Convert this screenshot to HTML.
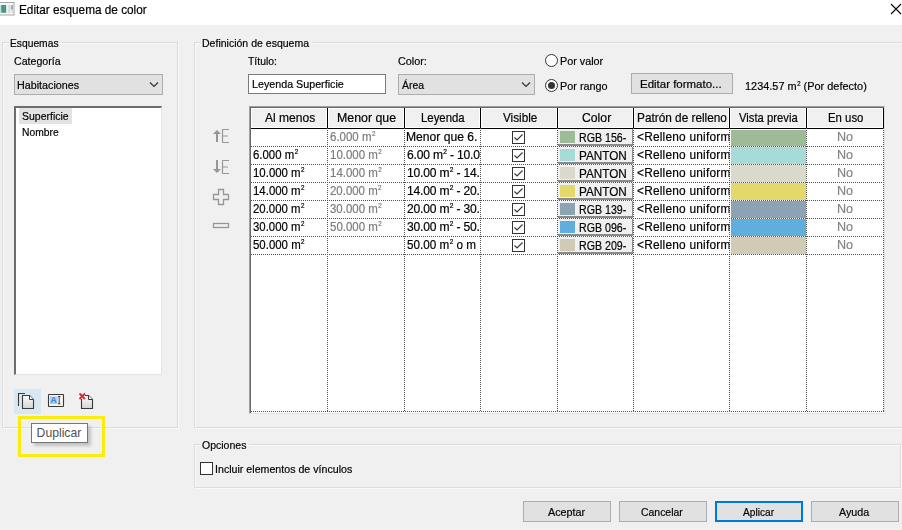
<!DOCTYPE html>
<html><head><meta charset="utf-8"><style>
html,body{margin:0;padding:0}
body{width:902px;height:530px;position:relative;overflow:hidden;background:#f0f0f0;font-family:"Liberation Sans",sans-serif}
.t{position:absolute;white-space:nowrap;color:#000;-webkit-text-stroke:0.2px currentColor}
sup{font-size:0.55em;vertical-align:0;position:relative;top:-0.7em;margin-left:0.5px}
</style></head><body>
<div class="g" style="position:absolute;left:0px;top:0px;width:902px;height:25px;background:#fff"></div>
<svg class="g" style="position:absolute;left:0;top:2px" width="15" height="14" viewBox="0 0 15 14">
<rect x="-0.5" y="0.5" width="14.5" height="12.5" fill="#f4f8f8" stroke="#a4a8a8"/>
<rect x="0" y="3" width="1.2" height="8" fill="#bfe3e3"/>
<rect x="1.2" y="3" width="5" height="7.8" fill="#4e9288"/>
<rect x="7.8" y="3" width="2.4" height="8" fill="#dcdcdc"/>
<rect x="10.8" y="3.2" width="2.2" height="4.5" fill="#8fb5ad"/>
<rect x="10.8" y="7.7" width="2.2" height="3" fill="#d6e6e2"/>
</svg>
<div id="title" class="t" style="left:18.68px;top:4.03px;font-size:12.72px;line-height:12.72px;letter-spacing:0.000px;color:#000;transform:scaleX(0.9263);transform-origin:0 0;">Editar esquema de color</div>
<svg class="g" style="position:absolute;left:890px;top:3px" width="12" height="12" viewBox="0 0 12 12"><path d="M1 1L11 11M11 1L1 11" stroke="#000" stroke-width="1.1"/></svg>
<div class="g" style="position:absolute;left:3px;top:43px;width:176px;height:386px;border:1px solid #f9f9f9;box-sizing:border-box"></div>
<div class="g" style="position:absolute;left:2px;top:42px;width:176px;height:386px;border:1px solid #dcdcdc;box-sizing:border-box"></div>
<div class="g" style="position:absolute;left:9px;top:41px;width:53px;height:4px;background:#f0f0f0"></div>
<div class="g" style="position:absolute;left:195px;top:43px;width:717px;height:386px;border:1px solid #f9f9f9;box-sizing:border-box"></div>
<div class="g" style="position:absolute;left:194px;top:42px;width:717px;height:386px;border:1px solid #dcdcdc;box-sizing:border-box"></div>
<div class="g" style="position:absolute;left:201px;top:41px;width:112px;height:4px;background:#f0f0f0"></div>
<div class="g" style="position:absolute;left:195px;top:445px;width:707px;height:44px;border:1px solid #f9f9f9;box-sizing:border-box"></div>
<div class="g" style="position:absolute;left:194px;top:444px;width:707px;height:44px;border:1px solid #dcdcdc;box-sizing:border-box"></div>
<div class="g" style="position:absolute;left:200px;top:443px;width:49px;height:4px;background:#f0f0f0"></div>
<div id="esq" class="t" style="left:9.99px;top:37.13px;font-size:11.66px;line-height:11.66px;letter-spacing:0.000px;color:#000;transform:scaleX(0.8811);transform-origin:0 0;">Esquemas</div>
<div id="defi" class="t" style="left:202.43px;top:37.13px;font-size:11.66px;line-height:11.66px;letter-spacing:0.000px;color:#000;transform:scaleX(0.9031);transform-origin:0 0;">Definición de esquema</div>
<div id="opc" class="t" style="left:202.38px;top:439.13px;font-size:11.66px;line-height:11.66px;letter-spacing:0.000px;color:#000;transform:scaleX(0.9016);transform-origin:0 0;">Opciones</div>
<div id="cat" class="t" style="left:13.72px;top:55.13px;font-size:11.66px;line-height:11.66px;letter-spacing:0.000px;color:#000;transform:scaleX(0.9089);transform-origin:0 0;">Categoría</div>
<div class="g" style="position:absolute;left:14px;top:74px;width:149px;height:21px;background:#e1e1e1;border:1px solid #adadad;box-sizing:border-box"></div>
<div id="hab" class="t" style="left:16.89px;top:78.63px;font-size:11.66px;line-height:11.66px;letter-spacing:0.000px;color:#000;transform:scaleX(0.9223);transform-origin:0 0;">Habitaciones</div>
<svg class="g" style="position:absolute;left:149px;top:81px" width="10" height="7" viewBox="0 0 10 7"><path d="M1 1.5L5 5.5L9 1.5" fill="none" stroke="#333" stroke-width="1.2"/></svg>
<div class="g" style="position:absolute;left:14px;top:106px;width:148px;height:269px;background:#fff;border-top:2px solid #6d6d6d;border-left:2px solid #6d6d6d;border-right:1px solid #e3e3e3;border-bottom:1px solid #e3e3e3;box-sizing:border-box"></div>
<div class="g" style="position:absolute;left:19px;top:108px;width:53px;height:16px;background:#e3e3e3"></div>
<div id="sup" class="t" style="left:21.61px;top:109.63px;font-size:11.66px;line-height:11.66px;letter-spacing:0.000px;color:#000;transform:scaleX(0.9003);transform-origin:0 0;">Superficie</div>
<div id="nom" class="t" style="left:21.88px;top:125.63px;font-size:11.66px;line-height:11.66px;letter-spacing:0.000px;color:#000;transform:scaleX(0.8839);transform-origin:0 0;">Nombre</div>
<div class="g" style="position:absolute;left:14px;top:389px;width:27px;height:25px;background:#d9e7f3"></div>
<svg class="g" style="position:absolute;left:14px;top:389px" width="84" height="24" viewBox="0 0 84 24">
<defs><linearGradient id="pg" x1="0" y1="0" x2="0" y2="1"><stop offset="0" stop-color="#fbfbfb"/><stop offset="1" stop-color="#d4d4d4"/></linearGradient></defs>
<path d="M4.5 17V4.5H11" fill="none" stroke="#3a3a3a" stroke-width="1.1"/>
<path d="M8.5 6.5H15.5L19.5 10.5V19.5H8.5Z" fill="url(#pg)" stroke="#3a3a3a" stroke-width="1.1"/>
<path d="M15.5 6.5V10.5H19.5" fill="#fff" stroke="#3a3a3a" stroke-width="1"/>
<rect x="34.5" y="5.5" width="15" height="12" rx="0.5" fill="#f4f4f4" stroke="#3a3a3a" stroke-width="1.1"/>
<rect x="36" y="7.5" width="7.6" height="7.5" fill="#a9d1f5"/>
<text x="36.6" y="14.2" font-family="Liberation Sans" font-size="8.6" font-weight="bold" fill="#3a86d0">A</text>
<path d="M44 7.5H46.4M45.2 7.5V14.8M44 14.8H46.4" stroke="#333" stroke-width="0.9" fill="none"/>
<path d="M67.5 10V19.5H78.5V10.5L74.5 6.5H71" fill="url(#pg)" stroke="#3a3a3a" stroke-width="1.1"/>
<path d="M74.5 6.5V10.5H78.5" fill="#fff" stroke="#3a3a3a" stroke-width="1"/>
<path d="M65.5 4.5L71 10M71 4.5L65.5 10" stroke="#d42a2a" stroke-width="1.8"/>
</svg>
<div class="g" style="position:absolute;left:18px;top:416px;width:87px;height:41px;border:3px solid #fcec0c;box-sizing:border-box"></div>
<div class="g" style="position:absolute;left:34px;top:426px;width:57px;height:20px;background:#6e6e6e;opacity:0.35;filter:blur(1.5px)"></div>
<div class="g" style="position:absolute;left:31px;top:423px;width:57px;height:20px;background:#fff;border:1px solid #767676;box-sizing:border-box"></div>
<div id="dup" class="t" style="left:36.59px;top:427.18px;font-size:12.19px;line-height:12.19px;letter-spacing:0.000px;color:#505050;-webkit-text-stroke:0;">Duplicar</div>
<div id="tit" class="t" style="left:247.70px;top:54.83px;font-size:11.66px;line-height:11.66px;letter-spacing:0.000px;color:#000;transform:scaleX(0.8949);transform-origin:0 0;">Título:</div>
<div class="g" style="position:absolute;left:248px;top:74px;width:138px;height:20px;background:#fff;border:1px solid #7a7a7a;box-sizing:border-box"></div>
<div id="leys" class="t" style="left:252.36px;top:77.73px;font-size:11.66px;line-height:11.66px;letter-spacing:0.000px;color:#000;transform:scaleX(0.9193);transform-origin:0 0;">Leyenda Superficie</div>
<div id="colr" class="t" style="left:397.88px;top:55.03px;font-size:11.66px;line-height:11.66px;letter-spacing:0.000px;color:#000;transform:scaleX(0.9269);transform-origin:0 0;">Color:</div>
<div class="g" style="position:absolute;left:398px;top:74px;width:137px;height:21px;background:#e1e1e1;border:1px solid #adadad;box-sizing:border-box"></div>
<div id="area" class="t" style="left:402.00px;top:78.83px;font-size:11.66px;line-height:11.66px;letter-spacing:0.000px;color:#000;transform:scaleX(0.8964);transform-origin:0 0;">Área</div>
<svg class="g" style="position:absolute;left:521px;top:81px" width="10" height="7" viewBox="0 0 10 7"><path d="M1 1.5L5 5.5L9 1.5" fill="none" stroke="#333" stroke-width="1.2"/></svg>
<svg class="g" style="position:absolute;left:545px;top:54px" width="14" height="40" viewBox="0 0 14 40">
<circle cx="6.5" cy="6.5" r="6" fill="#fff" stroke="#333" stroke-width="1"/>
<circle cx="6.5" cy="31.5" r="6" fill="#fff" stroke="#333" stroke-width="1"/>
<circle cx="6.5" cy="31.5" r="3.5" fill="#333"/>
</svg>
<div id="pval" class="t" style="left:559.94px;top:55.03px;font-size:11.66px;line-height:11.66px;letter-spacing:0.000px;color:#000;transform:scaleX(0.9245);transform-origin:0 0;">Por valor</div>
<div id="pran" class="t" style="left:559.84px;top:79.73px;font-size:11.66px;line-height:11.66px;letter-spacing:0.000px;color:#000;transform:scaleX(0.9306);transform-origin:0 0;">Por rango</div>
<div class="g" style="position:absolute;left:631px;top:73px;width:102px;height:21px;background:#e1e1e1;border:1px solid #adadad;box-sizing:border-box"></div>
<div id="edf" class="t" style="left:639.60px;top:78.13px;font-size:11.66px;line-height:11.66px;letter-spacing:0.000px;color:#000;transform:scaleX(0.9846);transform-origin:0 0;">Editar formato...</div>
<div id="sup2def" class="t" style="left:744.51px;top:80.13px;font-size:11.66px;line-height:11.66px;letter-spacing:0.000px;color:#000;transform:scaleX(0.9383);transform-origin:0 0;">1234.57 m<sup>2</sup> (Por defecto)</div>
<svg class="g" style="position:absolute;left:210px;top:125px" width="22" height="110" viewBox="0 0 22 110">
<g fill="#969696" stroke="#969696">
<path d="M3 9L7 5L11 9Z" stroke="none"/><rect x="6" y="7" width="2" height="10" stroke="none"/>
<path d="M12.5 4.5V17.5M12.5 4.5H19M12.5 11H18M12.5 17.5H19" fill="none" stroke-width="1.2"/>
<path d="M3 44L7 48L11 44Z" stroke="none"/><rect x="6" y="35" width="2" height="10" stroke="none"/>
<path d="M12.5 35.5V48.5M12.5 35.5H19M12.5 42H18M12.5 48.5H19" fill="none" stroke-width="1.2"/>
<path d="M8.5 64.5H13.5V69.5H18.5V74.5H13.5V79.5H8.5V74.5H3.5V69.5H8.5Z" fill="none" stroke-width="1.3"/>
<rect x="3.5" y="98.5" width="15" height="4" fill="none" stroke-width="1.3"/>
</g></svg>
<div class="g" style="position:absolute;left:249px;top:106px;width:636px;height:308px;background:#fff;border-top:1px solid #a0a0a0;border-left:1px solid #a0a0a0;border-right:1px solid #e3e3e3;border-bottom:1px solid #e3e3e3;box-sizing:border-box"></div>
<div class="g" style="position:absolute;left:250px;top:107px;width:634px;height:306px;border-top:1px solid #696969;border-left:1px solid #696969;box-sizing:border-box"></div>
<div class="g" style="position:absolute;left:251px;top:108px;width:76px;height:20px;background:#f0f0f0;border:1px solid #fff;box-sizing:border-box"></div>
<div class="g" style="position:absolute;left:328px;top:108px;width:76px;height:20px;background:#f0f0f0;border:1px solid #fff;box-sizing:border-box"></div>
<div class="g" style="position:absolute;left:405px;top:108px;width:75px;height:20px;background:#f0f0f0;border:1px solid #fff;box-sizing:border-box"></div>
<div class="g" style="position:absolute;left:481px;top:108px;width:76px;height:20px;background:#f0f0f0;border:1px solid #fff;box-sizing:border-box"></div>
<div class="g" style="position:absolute;left:558px;top:108px;width:75px;height:20px;background:#f0f0f0;border:1px solid #fff;box-sizing:border-box"></div>
<div class="g" style="position:absolute;left:634px;top:108px;width:95px;height:20px;background:#f0f0f0;border:1px solid #fff;box-sizing:border-box"></div>
<div class="g" style="position:absolute;left:730px;top:108px;width:76px;height:20px;background:#f0f0f0;border:1px solid #fff;box-sizing:border-box"></div>
<div class="g" style="position:absolute;left:807px;top:108px;width:76px;height:20px;background:#f0f0f0;border:1px solid #fff;box-sizing:border-box"></div>
<div class="g" style="position:absolute;left:251px;top:128px;width:633px;height:1px;background:#000"></div>
<div class="g" style="position:absolute;left:327px;top:108px;width:1px;height:21px;background:#000"></div>
<div class="g" style="position:absolute;left:404px;top:108px;width:1px;height:21px;background:#000"></div>
<div class="g" style="position:absolute;left:480px;top:108px;width:1px;height:21px;background:#000"></div>
<div class="g" style="position:absolute;left:557px;top:108px;width:1px;height:21px;background:#000"></div>
<div class="g" style="position:absolute;left:633px;top:108px;width:1px;height:21px;background:#000"></div>
<div class="g" style="position:absolute;left:729px;top:108px;width:1px;height:21px;background:#000"></div>
<div class="g" style="position:absolute;left:806px;top:108px;width:1px;height:21px;background:#000"></div>
<div class="g" style="position:absolute;left:883px;top:108px;width:1px;height:21px;background:#000"></div>
<div class="g" style="position:absolute;left:327px;top:128px;width:1px;height:284px;background-image:repeating-linear-gradient(to bottom,#505050 0,#505050 1px,transparent 1px,transparent 2px)"></div>
<div class="g" style="position:absolute;left:404px;top:128px;width:1px;height:284px;background-image:repeating-linear-gradient(to bottom,#505050 0,#505050 1px,transparent 1px,transparent 2px)"></div>
<div class="g" style="position:absolute;left:480px;top:128px;width:1px;height:284px;background-image:repeating-linear-gradient(to bottom,#505050 0,#505050 1px,transparent 1px,transparent 2px)"></div>
<div class="g" style="position:absolute;left:557px;top:128px;width:1px;height:284px;background-image:repeating-linear-gradient(to bottom,#505050 0,#505050 1px,transparent 1px,transparent 2px)"></div>
<div class="g" style="position:absolute;left:633px;top:128px;width:1px;height:284px;background-image:repeating-linear-gradient(to bottom,#505050 0,#505050 1px,transparent 1px,transparent 2px)"></div>
<div class="g" style="position:absolute;left:729px;top:128px;width:1px;height:284px;background-image:repeating-linear-gradient(to bottom,#505050 0,#505050 1px,transparent 1px,transparent 2px)"></div>
<div class="g" style="position:absolute;left:806px;top:128px;width:1px;height:284px;background-image:repeating-linear-gradient(to bottom,#505050 0,#505050 1px,transparent 1px,transparent 2px)"></div>
<div class="g" style="position:absolute;left:883px;top:128px;width:1px;height:284px;background-image:repeating-linear-gradient(to bottom,#505050 0,#505050 1px,transparent 1px,transparent 2px)"></div>
<div class="g" style="position:absolute;left:251px;top:146px;width:633px;height:1px;background-image:repeating-linear-gradient(to right,#505050 0,#505050 1px,transparent 1px,transparent 2px)"></div>
<div class="g" style="position:absolute;left:251px;top:164px;width:633px;height:1px;background-image:repeating-linear-gradient(to right,#505050 0,#505050 1px,transparent 1px,transparent 2px)"></div>
<div class="g" style="position:absolute;left:251px;top:182px;width:633px;height:1px;background-image:repeating-linear-gradient(to right,#505050 0,#505050 1px,transparent 1px,transparent 2px)"></div>
<div class="g" style="position:absolute;left:251px;top:200px;width:633px;height:1px;background-image:repeating-linear-gradient(to right,#505050 0,#505050 1px,transparent 1px,transparent 2px)"></div>
<div class="g" style="position:absolute;left:251px;top:218px;width:633px;height:1px;background-image:repeating-linear-gradient(to right,#505050 0,#505050 1px,transparent 1px,transparent 2px)"></div>
<div class="g" style="position:absolute;left:251px;top:236px;width:633px;height:1px;background-image:repeating-linear-gradient(to right,#505050 0,#505050 1px,transparent 1px,transparent 2px)"></div>
<div class="g" style="position:absolute;left:251px;top:254px;width:633px;height:1px;background-image:repeating-linear-gradient(to right,#505050 0,#505050 1px,transparent 1px,transparent 2px)"></div>
<div class="g" style="position:absolute;left:251px;top:411px;width:633px;height:1px;background-image:repeating-linear-gradient(to right,#505050 0,#505050 1px,transparent 1px,transparent 2px)"></div>
<div id="h1" class="t" style="left:264.92px;top:112.23px;font-size:12.72px;line-height:12.72px;letter-spacing:0.000px;color:#000;transform:scaleX(0.9472);transform-origin:0 0;">Al menos</div>
<div id="h2" class="t" style="left:337.07px;top:112.23px;font-size:12.72px;line-height:12.72px;letter-spacing:0.000px;color:#000;transform:scaleX(0.9722);transform-origin:0 0;">Menor que</div>
<div id="h3" class="t" style="left:420.53px;top:112.23px;font-size:12.72px;line-height:12.72px;letter-spacing:0.000px;color:#000;transform:scaleX(0.8956);transform-origin:0 0;">Leyenda</div>
<div id="h4" class="t" style="left:503.45px;top:112.23px;font-size:12.72px;line-height:12.72px;letter-spacing:0.000px;color:#000;transform:scaleX(0.9216);transform-origin:0 0;">Visible</div>
<div id="h5" class="t" style="left:582.15px;top:112.23px;font-size:12.72px;line-height:12.72px;letter-spacing:0.000px;color:#000;transform:scaleX(0.9609);transform-origin:0 0;">Color</div>
<div id="h6" class="t" style="left:636.52px;top:112.23px;font-size:12.72px;line-height:12.72px;letter-spacing:0.000px;color:#000;transform:scaleX(0.9285);transform-origin:0 0;">Patrón de relleno</div>
<div id="h7" class="t" style="left:739.19px;top:112.23px;font-size:12.72px;line-height:12.72px;letter-spacing:0.000px;color:#000;transform:scaleX(0.8858);transform-origin:0 0;">Vista previa</div>
<div id="h8" class="t" style="left:827.53px;top:112.23px;font-size:12.72px;line-height:12.72px;letter-spacing:0.000px;color:#000;transform:scaleX(0.8940);transform-origin:0 0;">En uso</div>
<div id="b0sup2" class="t" style="left:330.00px;top:131.23px;font-size:12.72px;line-height:12.72px;letter-spacing:0.000px;color:#7c7c7c;transform:scaleX(0.9023);transform-origin:0 0;">6.000 m<sup>2</sup></div>
<div id="l0sup2" class="t" style="left:406.32px;top:131.23px;font-size:12.72px;line-height:12.72px;letter-spacing:0.000px;color:#000;transform:scaleX(0.9522);transform-origin:0 0;">Menor que 6.</div>
<div class="g" style="position:absolute;left:512px;top:131px;width:13px;height:13px;border:1px solid #333;background:#fff;box-sizing:border-box"></div>
<svg class="g" style="position:absolute;left:512px;top:131px" width="13" height="13" viewBox="0 0 13 13"><path d="M2.5 6.5L5 9L10.5 3.5" fill="none" stroke="#333" stroke-width="1.1"/></svg>
<div class="g" style="position:absolute;left:558px;top:129px;width:75px;height:17px;background:#f0f0f0;border-right:1px solid #8a8a8a;border-bottom:2px solid #8a8a8a;box-sizing:border-box"></div>
<div class="g" style="position:absolute;left:560px;top:131px;width:15px;height:12px;background:#9cbb96"></div>
<div id="c0" class="t" style="left:578.64px;top:132.03px;font-size:12.72px;line-height:12.72px;letter-spacing:0.000px;color:#000;transform:scaleX(0.8360);transform-origin:0 0;">RGB 156-</div>
<div id="p0" class="t" style="left:636.75px;top:131.23px;font-size:12.72px;line-height:12.72px;letter-spacing:0.220px;color:#000;width:99.20px;overflow:hidden;transform:scaleX(0.9350);transform-origin:0 0;">&lt;Relleno uniform</div>
<div class="g" style="position:absolute;left:731px;top:130px;width:75px;height:16px;background:#9cbb96"></div>
<div id="n0" class="t" style="left:836.57px;top:131.23px;font-size:12.72px;line-height:12.72px;letter-spacing:0.000px;color:#858585;transform:scaleX(0.9886);transform-origin:0 0;">No</div>
<div id="a1sup2" class="t" style="left:252.71px;top:149.23px;font-size:12.72px;line-height:12.72px;letter-spacing:0.000px;color:#000;transform:scaleX(0.8959);transform-origin:0 0;">6.000 m<sup>2</sup></div>
<div id="b1sup2" class="t" style="left:329.51px;top:149.23px;font-size:12.72px;line-height:12.72px;letter-spacing:0.000px;color:#7c7c7c;transform:scaleX(0.9029);transform-origin:0 0;">10.000 m<sup>2</sup></div>
<div id="l1sup2" class="t" style="left:406.71px;top:149.23px;font-size:12.72px;line-height:12.72px;letter-spacing:-0.200px;color:#000;width:77.15px;overflow:hidden;transform:scaleX(0.9500);transform-origin:0 0;">6.00 m<sup>2</sup> - 10.0</div>
<div class="g" style="position:absolute;left:512px;top:149px;width:13px;height:13px;border:1px solid #333;background:#fff;box-sizing:border-box"></div>
<svg class="g" style="position:absolute;left:512px;top:149px" width="13" height="13" viewBox="0 0 13 13"><path d="M2.5 6.5L5 9L10.5 3.5" fill="none" stroke="#333" stroke-width="1.1"/></svg>
<div class="g" style="position:absolute;left:558px;top:147px;width:75px;height:17px;background:#f0f0f0;border-right:1px solid #8a8a8a;border-bottom:2px solid #8a8a8a;box-sizing:border-box"></div>
<div class="g" style="position:absolute;left:560px;top:149px;width:15px;height:12px;background:#a7dbd8"></div>
<div id="c1" class="t" style="left:578.64px;top:150.03px;font-size:12.72px;line-height:12.72px;letter-spacing:0.000px;color:#000;transform:scaleX(0.9225);transform-origin:0 0;">PANTON</div>
<div id="p1" class="t" style="left:637.32px;top:149.23px;font-size:12.72px;line-height:12.72px;letter-spacing:0.220px;color:#000;width:98.59px;overflow:hidden;transform:scaleX(0.9350);transform-origin:0 0;">&lt;Relleno uniform</div>
<div class="g" style="position:absolute;left:731px;top:147px;width:75px;height:17px;background:#a7dbd8"></div>
<div id="n1" class="t" style="left:836.57px;top:149.23px;font-size:12.72px;line-height:12.72px;letter-spacing:0.000px;color:#858585;transform:scaleX(0.9886);transform-origin:0 0;">No</div>
<div id="a2sup2" class="t" style="left:252.57px;top:167.23px;font-size:12.72px;line-height:12.72px;letter-spacing:0.000px;color:#000;transform:scaleX(0.8984);transform-origin:0 0;">10.000 m<sup>2</sup></div>
<div id="b2sup2" class="t" style="left:329.51px;top:167.23px;font-size:12.72px;line-height:12.72px;letter-spacing:0.000px;color:#7c7c7c;transform:scaleX(0.9029);transform-origin:0 0;">14.000 m<sup>2</sup></div>
<div id="l2sup2" class="t" style="left:406.72px;top:167.23px;font-size:12.72px;line-height:12.72px;letter-spacing:-0.200px;color:#000;width:77.13px;overflow:hidden;transform:scaleX(0.9500);transform-origin:0 0;">10.00 m<sup>2</sup> - 14.</div>
<div class="g" style="position:absolute;left:512px;top:167px;width:13px;height:13px;border:1px solid #333;background:#fff;box-sizing:border-box"></div>
<svg class="g" style="position:absolute;left:512px;top:167px" width="13" height="13" viewBox="0 0 13 13"><path d="M2.5 6.5L5 9L10.5 3.5" fill="none" stroke="#333" stroke-width="1.1"/></svg>
<div class="g" style="position:absolute;left:558px;top:165px;width:75px;height:17px;background:#f0f0f0;border-right:1px solid #8a8a8a;border-bottom:2px solid #8a8a8a;box-sizing:border-box"></div>
<div class="g" style="position:absolute;left:560px;top:167px;width:15px;height:12px;background:#d9dacb"></div>
<div id="c2" class="t" style="left:578.64px;top:168.03px;font-size:12.72px;line-height:12.72px;letter-spacing:0.000px;color:#000;transform:scaleX(0.9225);transform-origin:0 0;">PANTON</div>
<div id="p2" class="t" style="left:637.32px;top:167.23px;font-size:12.72px;line-height:12.72px;letter-spacing:0.220px;color:#000;width:98.59px;overflow:hidden;transform:scaleX(0.9350);transform-origin:0 0;">&lt;Relleno uniform</div>
<div class="g" style="position:absolute;left:731px;top:165px;width:75px;height:17px;background:#d9dacb"></div>
<div id="n2" class="t" style="left:836.57px;top:167.23px;font-size:12.72px;line-height:12.72px;letter-spacing:0.000px;color:#858585;transform:scaleX(0.9886);transform-origin:0 0;">No</div>
<div id="a3sup2" class="t" style="left:252.57px;top:185.23px;font-size:12.72px;line-height:12.72px;letter-spacing:0.000px;color:#000;transform:scaleX(0.8984);transform-origin:0 0;">14.000 m<sup>2</sup></div>
<div id="b3sup2" class="t" style="left:329.55px;top:185.23px;font-size:12.72px;line-height:12.72px;letter-spacing:0.000px;color:#7c7c7c;transform:scaleX(0.8989);transform-origin:0 0;">20.000 m<sup>2</sup></div>
<div id="l3sup2" class="t" style="left:406.72px;top:185.23px;font-size:12.72px;line-height:12.72px;letter-spacing:-0.200px;color:#000;width:77.13px;overflow:hidden;transform:scaleX(0.9500);transform-origin:0 0;">14.00 m<sup>2</sup> - 20.</div>
<div class="g" style="position:absolute;left:512px;top:185px;width:13px;height:13px;border:1px solid #333;background:#fff;box-sizing:border-box"></div>
<svg class="g" style="position:absolute;left:512px;top:185px" width="13" height="13" viewBox="0 0 13 13"><path d="M2.5 6.5L5 9L10.5 3.5" fill="none" stroke="#333" stroke-width="1.1"/></svg>
<div class="g" style="position:absolute;left:558px;top:183px;width:75px;height:17px;background:#f0f0f0;border-right:1px solid #8a8a8a;border-bottom:2px solid #8a8a8a;box-sizing:border-box"></div>
<div class="g" style="position:absolute;left:560px;top:185px;width:15px;height:12px;background:#e3d96a"></div>
<div id="c3" class="t" style="left:578.64px;top:186.03px;font-size:12.72px;line-height:12.72px;letter-spacing:0.000px;color:#000;transform:scaleX(0.9225);transform-origin:0 0;">PANTON</div>
<div id="p3" class="t" style="left:637.32px;top:185.23px;font-size:12.72px;line-height:12.72px;letter-spacing:0.220px;color:#000;width:98.59px;overflow:hidden;transform:scaleX(0.9350);transform-origin:0 0;">&lt;Relleno uniform</div>
<div class="g" style="position:absolute;left:731px;top:183px;width:75px;height:17px;background:#e3d96a"></div>
<div id="n3" class="t" style="left:836.57px;top:185.23px;font-size:12.72px;line-height:12.72px;letter-spacing:0.000px;color:#858585;transform:scaleX(0.9886);transform-origin:0 0;">No</div>
<div id="a4sup2" class="t" style="left:252.86px;top:203.23px;font-size:12.72px;line-height:12.72px;letter-spacing:0.000px;color:#000;transform:scaleX(0.8948);transform-origin:0 0;">20.000 m<sup>2</sup></div>
<div id="b4sup2" class="t" style="left:329.50px;top:203.23px;font-size:12.72px;line-height:12.72px;letter-spacing:0.000px;color:#7c7c7c;transform:scaleX(0.9000);transform-origin:0 0;">30.000 m<sup>2</sup></div>
<div id="l4sup2" class="t" style="left:406.84px;top:203.23px;font-size:12.72px;line-height:12.72px;letter-spacing:-0.200px;color:#000;width:77.01px;overflow:hidden;transform:scaleX(0.9500);transform-origin:0 0;">20.00 m<sup>2</sup> - 30.</div>
<div class="g" style="position:absolute;left:512px;top:203px;width:13px;height:13px;border:1px solid #333;background:#fff;box-sizing:border-box"></div>
<svg class="g" style="position:absolute;left:512px;top:203px" width="13" height="13" viewBox="0 0 13 13"><path d="M2.5 6.5L5 9L10.5 3.5" fill="none" stroke="#333" stroke-width="1.1"/></svg>
<div class="g" style="position:absolute;left:558px;top:201px;width:75px;height:17px;background:#f0f0f0;border-right:1px solid #8a8a8a;border-bottom:2px solid #8a8a8a;box-sizing:border-box"></div>
<div class="g" style="position:absolute;left:560px;top:203px;width:15px;height:12px;background:#8ba3b3"></div>
<div id="c4" class="t" style="left:578.64px;top:204.03px;font-size:12.72px;line-height:12.72px;letter-spacing:0.000px;color:#000;transform:scaleX(0.8360);transform-origin:0 0;">RGB 139-</div>
<div id="p4" class="t" style="left:636.75px;top:203.23px;font-size:12.72px;line-height:12.72px;letter-spacing:0.220px;color:#000;width:99.20px;overflow:hidden;transform:scaleX(0.9350);transform-origin:0 0;">&lt;Relleno uniform</div>
<div class="g" style="position:absolute;left:731px;top:201px;width:75px;height:17px;background:#8ba3b3"></div>
<div id="n4" class="t" style="left:836.57px;top:203.23px;font-size:12.72px;line-height:12.72px;letter-spacing:0.000px;color:#858585;transform:scaleX(0.9886);transform-origin:0 0;">No</div>
<div id="a5sup2" class="t" style="left:253.18px;top:221.23px;font-size:12.72px;line-height:12.72px;letter-spacing:0.000px;color:#000;transform:scaleX(0.8948);transform-origin:0 0;">30.000 m<sup>2</sup></div>
<div id="b5sup2" class="t" style="left:329.57px;top:221.23px;font-size:12.72px;line-height:12.72px;letter-spacing:0.000px;color:#7c7c7c;transform:scaleX(0.9025);transform-origin:0 0;">50.000 m<sup>2</sup></div>
<div id="l5sup2" class="t" style="left:407.00px;top:221.23px;font-size:12.72px;line-height:12.72px;letter-spacing:-0.200px;color:#000;width:76.84px;overflow:hidden;transform:scaleX(0.9500);transform-origin:0 0;">30.00 m<sup>2</sup> - 50.</div>
<div class="g" style="position:absolute;left:512px;top:221px;width:13px;height:13px;border:1px solid #333;background:#fff;box-sizing:border-box"></div>
<svg class="g" style="position:absolute;left:512px;top:221px" width="13" height="13" viewBox="0 0 13 13"><path d="M2.5 6.5L5 9L10.5 3.5" fill="none" stroke="#333" stroke-width="1.1"/></svg>
<div class="g" style="position:absolute;left:558px;top:219px;width:75px;height:17px;background:#f0f0f0;border-right:1px solid #8a8a8a;border-bottom:2px solid #8a8a8a;box-sizing:border-box"></div>
<div class="g" style="position:absolute;left:560px;top:221px;width:15px;height:12px;background:#60aedb"></div>
<div id="c5" class="t" style="left:578.64px;top:222.03px;font-size:12.72px;line-height:12.72px;letter-spacing:0.000px;color:#000;transform:scaleX(0.8360);transform-origin:0 0;">RGB 096-</div>
<div id="p5" class="t" style="left:636.75px;top:221.23px;font-size:12.72px;line-height:12.72px;letter-spacing:0.220px;color:#000;width:99.20px;overflow:hidden;transform:scaleX(0.9350);transform-origin:0 0;">&lt;Relleno uniform</div>
<div class="g" style="position:absolute;left:731px;top:219px;width:75px;height:17px;background:#60aedb"></div>
<div id="n5" class="t" style="left:836.57px;top:221.23px;font-size:12.72px;line-height:12.72px;letter-spacing:0.000px;color:#858585;transform:scaleX(0.9886);transform-origin:0 0;">No</div>
<div id="a6sup2" class="t" style="left:252.73px;top:239.23px;font-size:12.72px;line-height:12.72px;letter-spacing:0.000px;color:#000;transform:scaleX(0.8988);transform-origin:0 0;">50.000 m<sup>2</sup></div>
<div id="l6sup2" class="t" style="left:406.70px;top:239.23px;font-size:12.72px;line-height:12.72px;letter-spacing:0.000px;color:#000;transform:scaleX(0.9192);transform-origin:0 0;">50.00 m<sup>2</sup> o m</div>
<div class="g" style="position:absolute;left:512px;top:239px;width:13px;height:13px;border:1px solid #333;background:#fff;box-sizing:border-box"></div>
<svg class="g" style="position:absolute;left:512px;top:239px" width="13" height="13" viewBox="0 0 13 13"><path d="M2.5 6.5L5 9L10.5 3.5" fill="none" stroke="#333" stroke-width="1.1"/></svg>
<div class="g" style="position:absolute;left:558px;top:237px;width:75px;height:17px;background:#f0f0f0;border-right:1px solid #8a8a8a;border-bottom:2px solid #8a8a8a;box-sizing:border-box"></div>
<div class="g" style="position:absolute;left:560px;top:239px;width:15px;height:12px;background:#d1cbb6"></div>
<div id="c6" class="t" style="left:578.64px;top:240.03px;font-size:12.72px;line-height:12.72px;letter-spacing:0.000px;color:#000;transform:scaleX(0.8360);transform-origin:0 0;">RGB 209-</div>
<div id="p6" class="t" style="left:636.75px;top:239.23px;font-size:12.72px;line-height:12.72px;letter-spacing:0.220px;color:#000;width:99.20px;overflow:hidden;transform:scaleX(0.9350);transform-origin:0 0;">&lt;Relleno uniform</div>
<div class="g" style="position:absolute;left:731px;top:237px;width:75px;height:17px;background:#d1cbb6"></div>
<div id="n6" class="t" style="left:836.57px;top:239.23px;font-size:12.72px;line-height:12.72px;letter-spacing:0.000px;color:#858585;transform:scaleX(0.9886);transform-origin:0 0;">No</div>
<div class="g" style="position:absolute;left:200px;top:462px;width:13px;height:13px;border:1px solid #333;background:#fff;box-sizing:border-box"></div>
<div id="incl" class="t" style="left:214.53px;top:462.73px;font-size:11.66px;line-height:11.66px;letter-spacing:0.000px;color:#000;transform:scaleX(0.9131);transform-origin:0 0;">Incluir elementos de vínculos</div>
<div class="g" style="position:absolute;left:523px;top:501px;width:88px;height:21px;background:#e1e1e1;border:1px solid #adadad;box-sizing:border-box"></div>
<div id="b1" class="t" style="left:547.86px;top:506.33px;font-size:11.66px;line-height:11.66px;letter-spacing:0.000px;color:#000;transform:scaleX(0.9253);transform-origin:0 0;">Aceptar</div>
<div class="g" style="position:absolute;left:619px;top:501px;width:88px;height:21px;background:#e1e1e1;border:1px solid #adadad;box-sizing:border-box"></div>
<div id="b2" class="t" style="left:641.18px;top:506.33px;font-size:11.66px;line-height:11.66px;letter-spacing:0.000px;color:#000;transform:scaleX(0.8955);transform-origin:0 0;">Cancelar</div>
<div class="g" style="position:absolute;left:715px;top:501px;width:88px;height:21px;background:#e1e1e1;border:2px solid #0078d7;box-sizing:border-box"></div>
<div id="b3" class="t" style="left:742.86px;top:506.33px;font-size:11.66px;line-height:11.66px;letter-spacing:0.000px;color:#000;transform:scaleX(0.8704);transform-origin:0 0;">Aplicar</div>
<div class="g" style="position:absolute;left:811px;top:501px;width:88px;height:21px;background:#e1e1e1;border:1px solid #adadad;box-sizing:border-box"></div>
<div id="b4" class="t" style="left:839.03px;top:506.33px;font-size:11.66px;line-height:11.66px;letter-spacing:0.000px;color:#000;transform:scaleX(0.9227);transform-origin:0 0;">Ayuda</div>
</body></html>
